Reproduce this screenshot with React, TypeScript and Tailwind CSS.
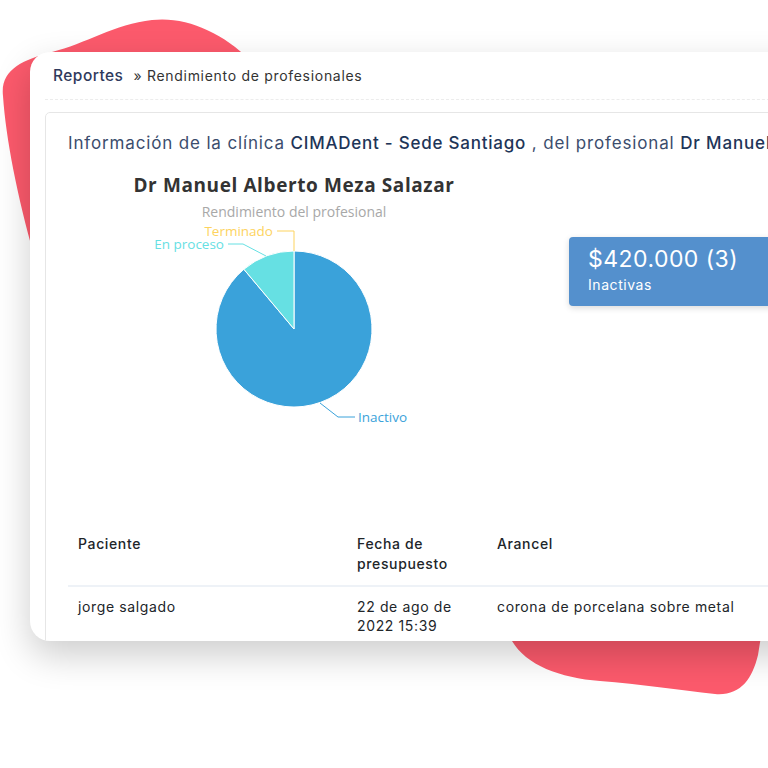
import React from "react";

const sans = "font-['Inter','Noto_Sans',sans-serif]";

function PieChart() {
  // center (226,165), r 78
  const cx = 226;
  const cy = 165;
  const r = 78;
  const a = (40 * Math.PI) / 180;
  const px = cx - r * Math.sin(a);
  const py = cy - r * Math.cos(a);
  const font = "'Open Sans', sans-serif";
  return (
    <svg width="452" height="300" viewBox="0 0 452 300" className="shrink-0">
      <text x="226" y="28" textAnchor="middle" fontFamily={font} fontWeight="700" fontSize="19" letterSpacing="0.6" fill="#333333">
        Dr Manuel Alberto Meza Salazar
      </text>
      <text x="226" y="53" textAnchor="middle" fontFamily={font} fontSize="14" fill="#a8a8a8">
        Rendimiento del profesional
      </text>

      <path
        d={`M${cx},${cy} L${cx},${cy - r} A${r},${r} 0 1 1 ${px},${py} Z`}
        fill="#3aa2da"
        stroke="#fff"
        strokeWidth="1"
      />
      <path
        d={`M${cx},${cy} L${px},${py} A${r},${r} 0 0 1 ${cx},${cy - r} Z`}
        fill="#66e0e3"
        stroke="#fff"
        strokeWidth="1"
      />

      {/* Terminado */}
      <polyline points="226,87 226,67 209,67" fill="none" stroke="#fdd35e" strokeWidth="1" />
      <text x="205" y="71.5" textAnchor="end" fontFamily={font} fontSize="13.5" fill="#fdd35e">
        Terminado
      </text>

      {/* En proceso */}
      <polyline points="198,92 175,80 160,80" fill="none" stroke="#66e0e3" strokeWidth="1" />
      <text x="156" y="84.5" textAnchor="end" fontFamily={font} fontSize="13.5" fill="#66e0e3">
        En proceso
      </text>

      {/* Inactivo */}
      <polyline points="252,239 270,253 287,253" fill="none" stroke="#3aa2da" strokeWidth="1" />
      <text x="290" y="257.5" fontFamily={font} fontSize="13.5" fill="#3aa2da">
        Inactivo
      </text>
    </svg>
  );
}

export default function App() {
  return (
    <div className={`relative w-[768px] h-[768px] overflow-hidden bg-white ${sans}`}>
      {/* decorative blobs */}
      <svg className="absolute inset-0" width="768" height="768" viewBox="0 0 768 768">
        <path
          d="M250,60 C222,32 185,16 152,20 C115,24 85,44 52,52 C22,60 0,70 3,96 C6,140 18,200 36,262 L220,220 Z"
          fill="#fc5a6c"
        />
        <path
          d="M505,600 L512,641 C526,665 560,678 600,681 C640,684 680,690 715,694 C740,696 752,680 758,655 L770,580 Z"
          fill="#fc5a6c"
        />
      </svg>

      <div className="relative pt-[52px] pl-[30px]">
        <div className="w-[790px] h-[589px] rounded-[20px] bg-white overflow-hidden shadow-[0_14px_36px_rgba(0,0,0,0.2)] px-[15px]">
          <div className="h-[48px] flex items-center pl-2 border-b border-dashed border-[#ececec]">
            <span className="text-[15.5px] tracking-[0.03em] font-medium text-[#2f3a5c]">Reportes</span>
            <span className="ml-[10px] text-[14px] tracking-[0.05em] text-[#333]">» Rendimiento de profesionales</span>
          </div>

          <div className="mt-[12px] h-[600px] border border-[#e6e6e6] rounded-[5px] px-[22px] pt-[19px]">
            <div className="text-[17px] leading-[22px] tracking-[0.05em] text-[#3b4d6d] whitespace-nowrap">
              Información de la clínica{" "}
              <span className="font-medium text-[#1e3558] tracking-[0.045em]">CIMADent - Sede Santiago</span> , del
              profesional <span className="font-medium text-[#1e3558]">Dr Manuel Alberto Meza Salazar</span>
            </div>

            <div className="flex items-start mt-[10px]">
              <PieChart />
              <div className="ml-[49px] mt-[73px] w-[230px] h-[69px] shrink-0 rounded-[4px] bg-[#5490cd] pl-[19px] pt-[8px] text-white shadow-[0_2px_6px_rgba(0,0,0,0.15)]">
                <div className="text-[23px] leading-[28px] tracking-[0.02em]">$420.000 (3)</div>
                <div className="mt-[3px] text-[14px] leading-[18px] tracking-[0.04em]">Inactivas</div>
              </div>
            </div>

            <div className="mt-[58px] grid grid-cols-[279px_140px_1fr] text-[14px] tracking-[0.045em] text-[#212529]">
              <div className="px-[10px] py-[12px] leading-[19.5px] font-medium border-b-2 border-[#eef2f7]">Paciente</div>
              <div className="px-[10px] py-[12px] leading-[19.5px] font-medium border-b-2 border-[#eef2f7]">
                Fecha de presupuesto
              </div>
              <div className="px-[10px] py-[12px] leading-[19.5px] font-medium border-b-2 border-[#eef2f7]">Arancel</div>

              <div className="px-[10px] pt-[10px] leading-[19px]">jorge salgado</div>
              <div className="px-[10px] pt-[10px] leading-[19px]">22 de ago de 2022 15:39</div>
              <div className="px-[10px] pt-[10px] leading-[19px] whitespace-nowrap">corona de porcelana sobre metal</div>
            </div>
          </div>
        </div>
      </div>
    </div>
  );
}
